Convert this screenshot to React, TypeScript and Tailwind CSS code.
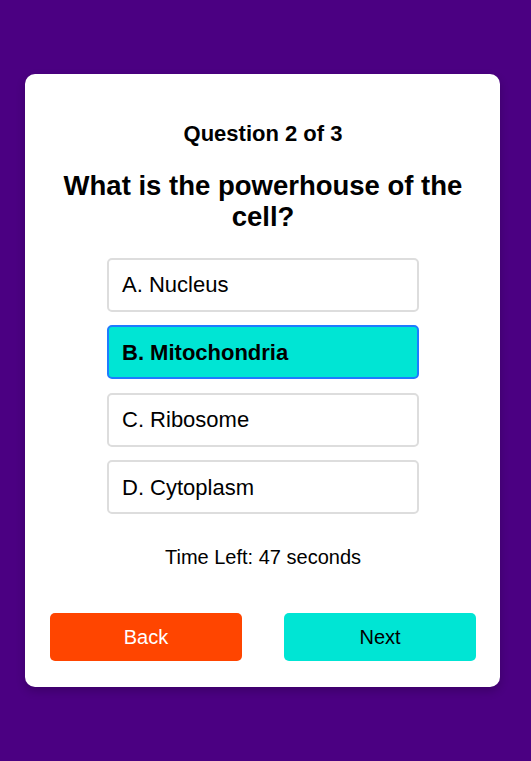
import React from "react";

const options = ["A. Nucleus", "B. Mitochondria", "C. Ribosome", "D. Cytoplasm"];

export default function App() {
  const selected = 1;
  return (
    <div
      className="min-h-[761px] w-full bg-[#4b0082] flex items-center justify-start pl-[25px]"
      style={{ fontFamily: '"Liberation Sans", Arial, sans-serif' }}
    >
      <div className="w-[475px] bg-white rounded-[10px] shadow-[0_4px_10px_rgba(0,0,0,0.2)] pl-[25px] pr-[24px] pt-[48px] pb-[25px] flex flex-col items-center text-black">
        <div className="text-[22px] leading-[24px] font-bold text-center">Question 2 of 3</div>
        <div className="mt-[24px] text-[27.5px] leading-[31px] font-bold text-center">
          What is the powerhouse of the cell?
        </div>
        <div className="mt-[26px] flex flex-col gap-[13.5px]">
          {options.map((o, i) => (
            <div
              key={o}
              className={
                i === selected
                  ? "w-[312px] h-[54px] rounded-[5px] border-2 border-[#1e7bff] bg-[#00e5d4] px-[13px] flex items-center text-[22px] font-bold"
                  : "w-[312px] h-[54px] rounded-[5px] border-2 border-[#dddddd] bg-white px-[13px] flex items-center text-[22px]"
              }
            >
              {o}
            </div>
          ))}
        </div>
        <div className="mt-[32px] text-[20px] leading-[22px] text-center">Time Left: 47 seconds</div>
        <div className="mt-[45px] mb-[1px] w-full flex justify-between">
          <div className="w-[192px] h-[48px] rounded-[5px] bg-[#ff4500] text-white text-[20px] flex items-center justify-center">
            Back
          </div>
          <div className="w-[192px] h-[48px] rounded-[5px] bg-[#00e5d4] text-black text-[20px] flex items-center justify-center">
            Next
          </div>
        </div>
      </div>
    </div>
  );
}
